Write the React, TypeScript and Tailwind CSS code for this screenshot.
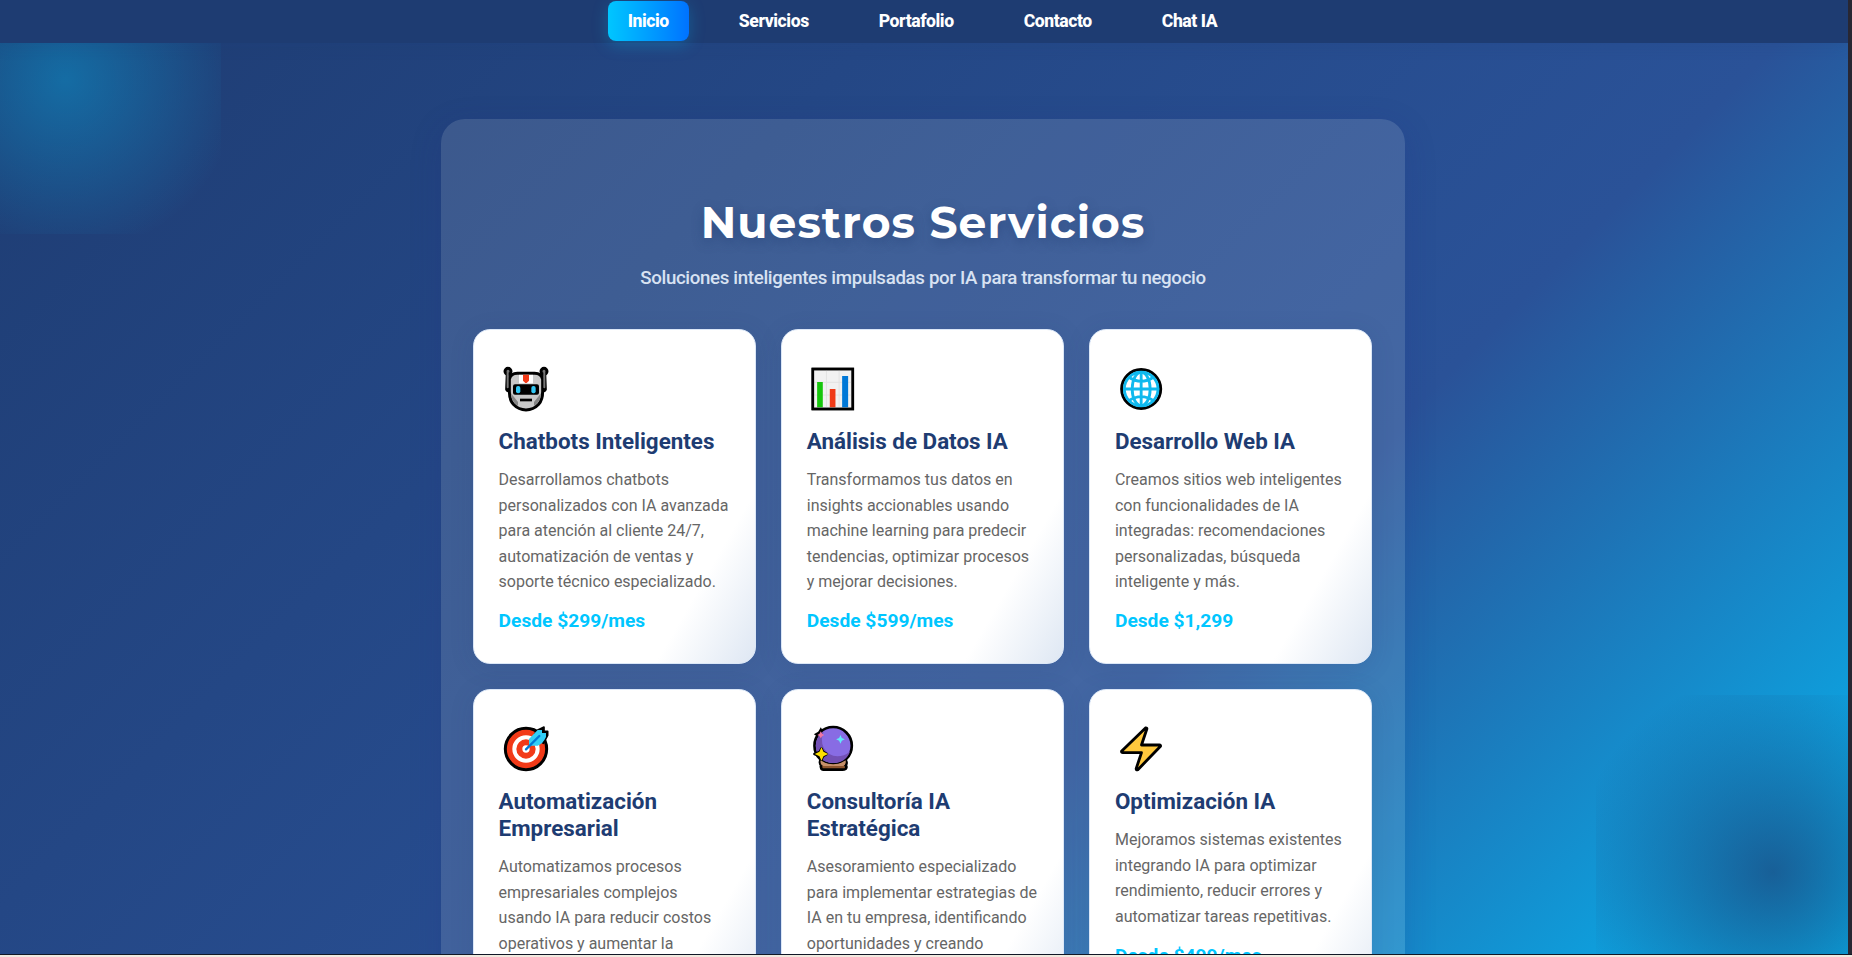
import type { ReactNode } from 'react';

const robot = (
  <svg viewBox="27 30 162 162" className="h-[54px] w-[54px]">
    <g stroke="#000" strokeWidth="9" strokeLinejoin="round" strokeLinecap="round">
      <path d="M52 66 L50 118 Q51 122 60 124 L66 84 L58 66 Z" fill="#777" />
      <path d="M164 66 L166 118 Q165 122 156 124 L150 84 L158 66 Z" fill="#777" />
      <circle cx="54" cy="64" r="9" fill="#777" />
      <circle cx="162" cy="64" r="9" fill="#777" />
      <path d="M58 124 V88 Q62 70 82 70 H134 Q154 70 158 88 V124 Q158 150 146 163 Q130 180 108 180 Q86 180 70 163 Q58 150 58 124 Z" fill="#c8c8c8" />
    </g>
    <path d="M53 68 V112 M163 68 V112" stroke="#777" strokeWidth="6" strokeLinecap="round" />
    <path d="M63 130 L84 156 V168 Q65 158 63 130 Z M153 130 L132 156 V168 Q151 158 153 130 Z" fill="#858585" />
    <path d="M87 74.500 H129 V100 H87 Z" fill="#fff" />
    <path d="M99 74.500 H117 V92 L110 99 H106 L99 92 Z" fill="#f23a18" />
    <rect x="69" y="103" width="78" height="31" rx="6" fill="#000" />
    <rect x="78" y="108" width="13" height="22" rx="6" fill="#32c8f5" />
    <rect x="124" y="108" width="13" height="22" rx="6" fill="#32c8f5" />
    <rect x="90" y="146" width="36" height="8" fill="#000" />
  </svg>
);

const chart = (
  <svg viewBox="21.600 30 162 162" className="h-[54px] w-[54px]">
    <rect x="39" y="57" width="120" height="120" fill="#f1f1f1" stroke="#000" strokeWidth="7" />
    <path d="M80 62 V172 M118 62 V172 M44 97 H154 M44 135 H154" stroke="#e2e2e2" strokeWidth="3" />
    <path d="M52 96 H69 V172 H52 Z" fill="#16c60c" />
    <path d="M90 117 H107 V172 H90 Z" fill="#f03a17" />
    <path d="M127 78 H145 V172 H127 Z" fill="#0078d7" />
    <rect x="39" y="57" width="120" height="120" fill="none" stroke="#000" strokeWidth="8" />
  </svg>
);

const globe = (
  <svg viewBox="15.500 30 162 162" className="h-[54px] w-[54px]">
    <circle cx="94" cy="117" r="58.500" fill="#fff" stroke="#000" strokeWidth="9" />
    <g fill="none" stroke="#0fb9ee" strokeWidth="8.500">
      <circle cx="94" cy="117" r="50.500" />
      <ellipse cx="94" cy="117" rx="27" ry="50" />
      <path d="M94 67 V167 M44 117 H144 M56 81 Q94 107 132 81 M56 153 Q94 127 132 153" />
    </g>
  </svg>
);

const target = (
  <svg viewBox="27 30 162 162" className="h-[54px] w-[54px]">
    <circle cx="108" cy="117" r="62" fill="#f23a18" stroke="#000" strokeWidth="9" />
    <circle cx="108" cy="117" r="35" fill="none" stroke="#fff" strokeWidth="12" />
    <circle cx="108" cy="117" r="11" fill="#fff" />
    <path d="M142 61 L162 51 V64 H173 V76 L160 100 L134 72 Z" fill="#000" stroke="#000" strokeWidth="5" strokeLinejoin="round" />
    <path d="M117 107 V87 L143 60 H156 V69 H168 V81 Q158 103 143 107 Z" fill="#32cff8" />
    <path d="M108 118 L148 78" stroke="#0078d7" strokeWidth="7" strokeLinecap="round" />
  </svg>
);

const crystal = (
  <svg viewBox="21.600 30 162 162" className="h-[54px] w-[54px]">
    <path d="M62 151 H138 Q143 160 137 166 Q143 171 137 177 Q134 179 128 179 H72 Q64 178 64 173 Q62 169 65 166 Q58 160 62 151 Z" fill="#8e562e" stroke="#000" strokeWidth="8" strokeLinejoin="round" />
    <path d="M62 153 H138 Q138 168 126 168 H74 Q62 168 62 153 Z" fill="#c69069" />
    <path d="M63 58 L68 67 L77 73 L68 79 L63 88 L58 79 L48 73 L58 67 Z" fill="#000" stroke="#000" strokeWidth="6" />
    <circle cx="100" cy="107" r="56" fill="#886ce4" stroke="#000" strokeWidth="8" />
    <path d="M72 64 Q60 88 72 114 Q91 147 132 136 Q143 132 151 124 Q139 159 100 159 Q48 156 48 106 Q51 76 72 64 Z" fill="#7350b5" />
    <path d="M62 151 Q80 163 100 163 Q120 163 138 151 L134 164 Q130 168 124 168 H76 Q66 168 62 151 Z" fill="#c69069" />
    <path d="M63 64 L67 71 L73 75 L67 79 L63 85 L59 79 L53 75 L59 71 Z" fill="#ef75a5" />
    <path d="M122 75 L126 84 L135 88 L126 92 L122 101 L118 92 L109 88 L118 84 Z" fill="#61e8fa" />
    <path d="M65 116 L70 126 L80 132 L70 138 L65 148 L60 138 L44 132 L60 126 Z" fill="#000" stroke="#000" strokeWidth="8" strokeLinejoin="round" />
    <path d="M65 112 L71 125 L85 132 L71 139 L65 152 L59 139 L45 132 L59 125 Z" fill="#ffe100" />
  </svg>
);

const bolt = (
  <svg viewBox="15.500 30 162 162" className="h-[54px] w-[54px]">
    <path d="M107 54 L35 124 Q35 128 39 128 H95 L79 176 Q79 181 84 179 L152 109 Q153 105 149 105 H95 L111 57 Q112 53 107 54 Z" fill="#ffc83d" stroke="#000" strokeWidth="8.500" strokeLinejoin="round" />
  </svg>
);

type Service = { icon: ReactNode; title: string[]; text: string[]; price: string };

const services: Service[] = [
  {
    icon: robot,
    title: ['Chatbots Inteligentes'],
    text: ['Desarrollamos chatbots', 'personalizados con IA avanzada', 'para atención al cliente 24/7,', 'automatización de ventas y', 'soporte técnico especializado.'],
    price: 'Desde $299/mes',
  },
  {
    icon: chart,
    title: ['Análisis de Datos IA'],
    text: ['Transformamos tus datos en', 'insights accionables usando', 'machine learning para predecir', 'tendencias, optimizar procesos', 'y mejorar decisiones.'],
    price: 'Desde $599/mes',
  },
  {
    icon: globe,
    title: ['Desarrollo Web IA'],
    text: ['Creamos sitios web inteligentes', 'con funcionalidades de IA', 'integradas: recomendaciones', 'personalizadas, búsqueda', 'inteligente y más.'],
    price: 'Desde $1,299',
  },
  {
    icon: target,
    title: ['Automatización', 'Empresarial'],
    text: ['Automatizamos procesos', 'empresariales complejos', 'usando IA para reducir costos', 'operativos y aumentar la'],
    price: '',
  },
  {
    icon: crystal,
    title: ['Consultoría IA', 'Estratégica'],
    text: ['Asesoramiento especializado', 'para implementar estrategias de', 'IA en tu empresa, identificando', 'oportunidades y creando'],
    price: '',
  },
  {
    icon: bolt,
    title: ['Optimización IA'],
    text: ['Mejoramos sistemas existentes', 'integrando IA para optimizar', 'rendimiento, reducir errores y', 'automatizar tareas repetitivas.'],
    price: 'Desde $499/mes',
  },
];

const links = ['Inicio', 'Servicios', 'Portafolio', 'Contacto', 'Chat IA'];

function Lines({ lines }: { lines: string[] }) {
  return (
    <>
      {lines.map((line) => (
        <span key={line} className="block whitespace-nowrap">{line}</span>
      ))}
    </>
  );
}

function Card({ service }: { service: Service }) {
  return (
    <article className="min-h-[334.600px] rounded-[17px] border border-[#dbe7f7] bg-[linear-gradient(120deg,#ffffff_79%,#dee7f3_100%)] px-[24.600px] pt-[30px] shadow-[0_4px_24px_rgba(30,60,114,0.13)]">
      {service.icon}
      <h2 className="mt-[14px] text-[22.400px] leading-[27px] font-bold text-[#1e3c72]"><Lines lines={service.title} /></h2>
      <p className="mt-[12px] text-[16px] leading-[25.600px] text-[#666666]"><Lines lines={service.text} /></p>
      {service.price && <p className="mt-[14.200px] text-[19.200px] leading-[23px] font-bold text-[#00c6ff]">{service.price}</p>}
    </article>
  );
}

export default function App() {
  return (
    <div className="h-[957px] w-[1852px] overflow-hidden bg-[#282733] font-[Roboto,sans-serif]">
      <div className="relative isolate h-[954px] w-[1848px] overflow-hidden bg-[linear-gradient(135deg,#1e3c72_0%,#2a5298_65%,#00c6ff_105%)]">
        <div className="absolute -top-[75px] -left-[90px] -z-10 h-[309px] w-[311px] bg-[radial-gradient(circle,rgba(0,198,255,0.34)_0%,rgba(0,198,255,0)_80%)]" />
        <div className="absolute top-[695px] left-[1596px] -z-10 h-[354px] w-[354px] bg-[radial-gradient(circle,rgba(30,60,114,0.67)_0%,rgba(30,60,114,0)_80%)]" />
        <nav className="relative flex h-[43px] w-full justify-center gap-[30px] bg-[#1e3c72] pt-px pr-[3px] shadow-[0_2px_16px_rgba(30,60,114,0.18)]">
          {links.map((link, i) => (
            <a key={link} className={i === 0
              ? 'h-[40px] rounded-[8px] bg-linear-to-r from-[#00c6ff] to-[#0072ff] px-[20px] text-[17.600px] leading-[41px] font-extrabold tracking-[-0.430px] text-white shadow-[0_4px_16px_rgba(0,198,255,0.25)]'
              : 'h-[40px] px-[20px] text-[17.600px] leading-[41px] font-extrabold tracking-[-0.430px] text-white'}>
              {link}
            </a>
          ))}
        </nav>
        <main className="mt-[76px] ml-[441px] h-[1000px] w-[964px] rounded-[24px] bg-white/12 px-[32px] pt-[76px] shadow-[0_8px_32px_rgba(31,38,135,0.18)]">
          <h1 className="text-center font-[Montserrat,Inter,sans-serif] text-[44px] leading-[54px] font-bold tracking-[1.060px] text-white [text-shadow:0_4px_12px_rgba(30,60,114,0.45)]">Nuestros Servicios</h1>
          <p className="mt-[15px] text-center text-[18.700px] leading-[28px] font-medium tracking-[-0.340px] text-[#d8e2f2]">Soluciones inteligentes impulsadas por IA para transformar tu negocio</p>
          <section className="mt-[37px] grid w-[899.500px] grid-cols-3 gap-x-[25px] gap-y-[25.600px]">
            {services.map((s) => <Card key={s.title[0]} service={s} />)}
          </section>
        </main>
      </div>
      <div className="h-px w-[1852px] bg-[#111827]" />
      <div className="h-[2px] w-[1852px] bg-[#f1e9df]" />
    </div>
  );
}
